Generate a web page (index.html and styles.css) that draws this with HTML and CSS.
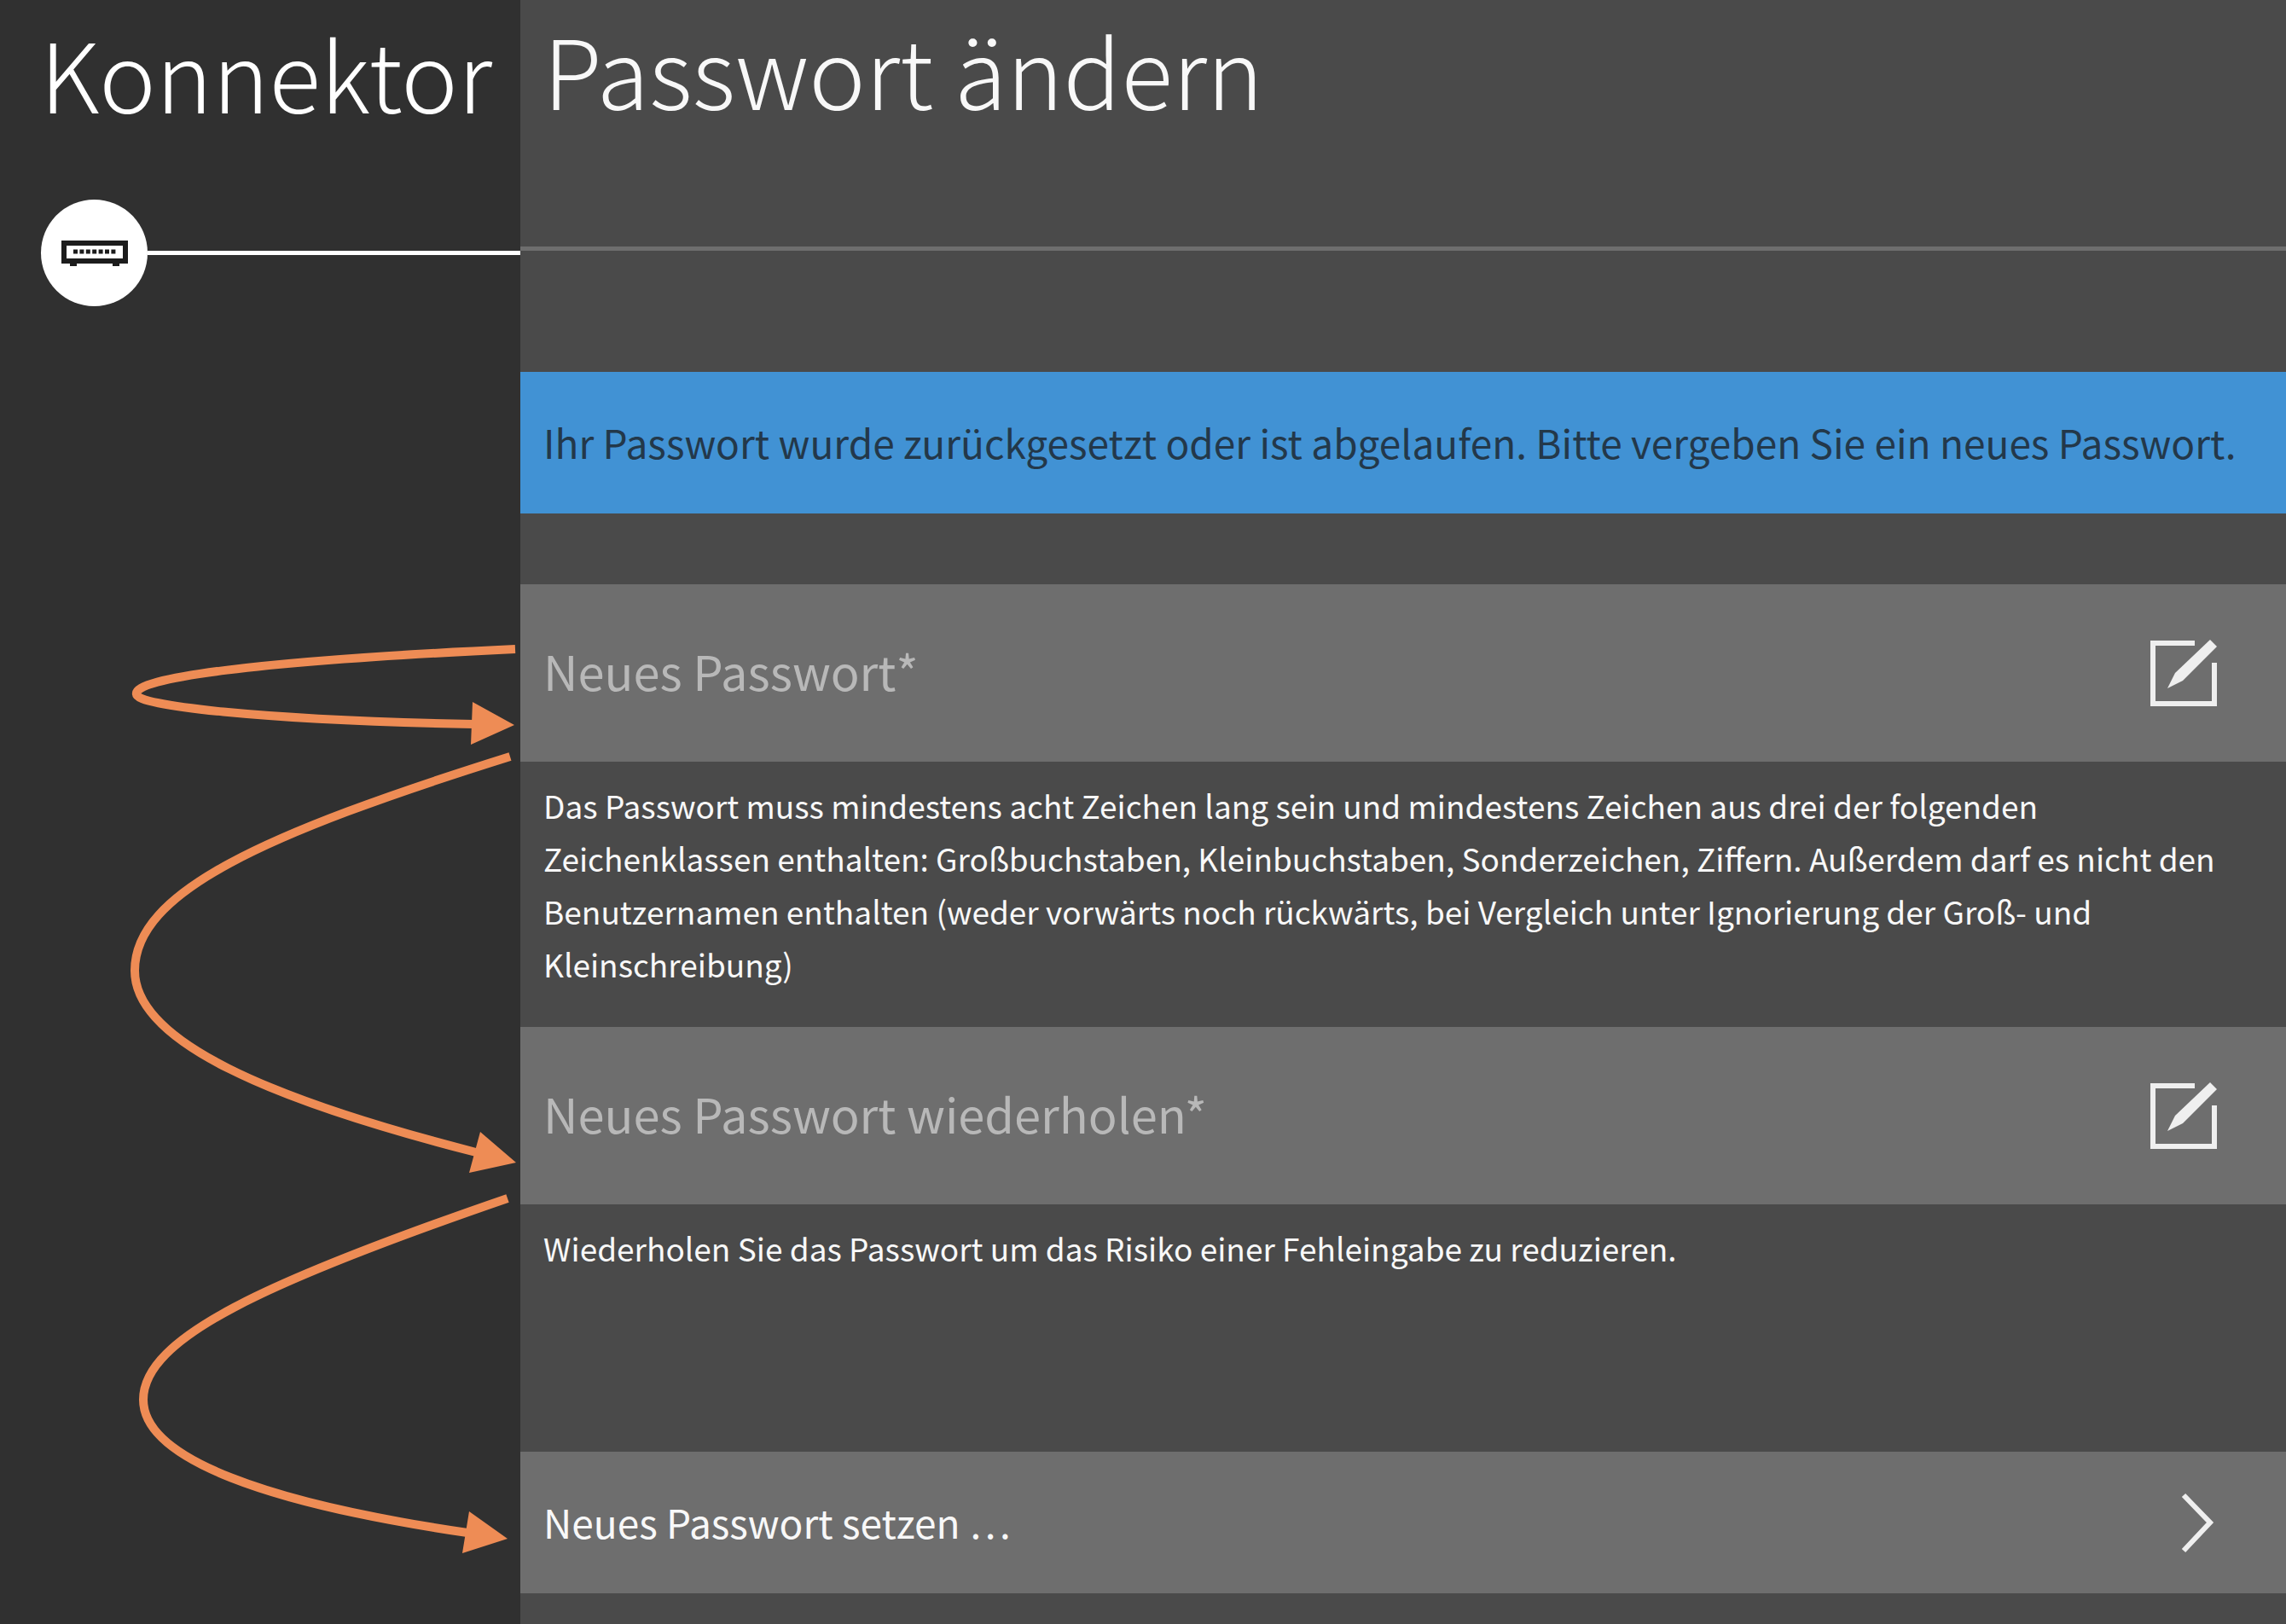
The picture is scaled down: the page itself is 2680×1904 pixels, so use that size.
FILE: index.html
```html
<!DOCTYPE html>
<html lang="de">
<head>
<meta charset="utf-8">
<meta name="viewport" content="width=device-width, initial-scale=1">
<title>Konnektor – Passwort ändern</title>
<link rel="stylesheet" href="styles.css">
</head>
<body>
<div class="layout">
  <aside class="sidebar">
    <h2 class="sidebar-title">Konnektor</h2>
    <div class="sidebar-track">
      <span class="device">
        <svg class="device-icon" viewBox="0 0 78 30" aria-hidden="true">
          <rect x="3" y="3" width="72" height="21" fill="none" stroke="#1c1c1c" stroke-width="6"/>
          <path d="M14 13h50" fill="none" stroke="#1c1c1c" stroke-width="5" stroke-dasharray="5 2.4"/>
          <path d="M10 26h8v4h-8zM60 26h8v4h-8z" fill="#1c1c1c"/>
        </svg>
      </span>
      <span class="sidebar-line"></span>
    </div>
    <svg class="arrows" viewBox="0 0 610 1904" aria-hidden="true">
      <g class="arrow-lines">
        <path d="M604 761C300 775 155 795 160 814C160 827 300 844 555 849"/>
        <path d="M598 887C308 978 158 1046 158 1138C158 1221 316 1289 558 1351"/>
        <path d="M595 1405C310 1503 168 1569 168 1641C168 1711 316 1763 548 1797"/>
      </g>
      <path class="arrow-heads" d="M554 823L603 850L552 873ZM563 1327L605 1363L550 1375ZM550 1772L595 1804L542 1821Z"/>
    </svg>
  </aside>
  <main class="content">
    <header class="page-header">
      <h1 class="page-title">Passwort ändern</h1>
    </header>
    <p class="banner" role="status">Ihr Passwort wurde zurückgesetzt oder ist abgelaufen. Bitte vergeben Sie ein neues Passwort.</p>
    <form class="form">
      <label class="field">
        <input class="field-input" type="password" placeholder="Neues Passwort*" aria-label="Neues Passwort" aria-describedby="hint-new">
        <svg class="row-icon" viewBox="0 0 80 80" aria-hidden="true">
          <path d="M53 2H1V79H79V28H73V73H7V8H53ZM21 58L30 40L71 1L79 9L39 49Z"/>
        </svg>
      </label>
      <p class="hint" id="hint-new">Das Passwort muss mindestens acht Zeichen lang sein und mindestens Zeichen aus drei der folgenden Zeichenklassen enthalten: Großbuchstaben, Kleinbuchstaben, Sonderzeichen, Ziffern. Außerdem darf es nicht den Benutzernamen enthalten (weder vorwärts noch rückwärts, bei Vergleich unter Ignorierung der Groß- und Kleinschreibung)</p>
      <label class="field">
        <input class="field-input" type="password" placeholder="Neues Passwort wiederholen*" aria-label="Neues Passwort wiederholen" aria-describedby="hint-repeat">
        <svg class="row-icon" viewBox="0 0 80 80" aria-hidden="true">
          <path d="M53 2H1V79H79V28H73V73H7V8H53ZM21 58L30 40L71 1L79 9L39 49Z"/>
        </svg>
      </label>
      <p class="hint" id="hint-repeat">Wiederholen Sie das Passwort um das Risiko einer Fehleingabe zu reduzieren.</p>
      <button class="submit" type="button">
        <span class="submit-label">Neues Passwort setzen …</span>
        <svg class="row-icon" viewBox="0 0 80 80" aria-hidden="true">
          <path class="chevron" d="M40 8L71 40L40 73"/>
        </svg>
      </button>
    </form>
  </main>
</div>
</body>
</html>
```

FILE: styles.css
```css
* {
  box-sizing: border-box;
}

body {
  margin: 0;
  background: #4a4a4a;
  color: #f8f8f8;
  font-family: "Noto Sans CJK SC", "Noto Sans", sans-serif;
}

h1,
h2,
p {
  margin: 0;
}

.layout {
  display: grid;
  grid-template-columns: 610px 1fr;
  min-height: 100vh;
}

.sidebar {
  position: relative;
  background: #303030;
}

.sidebar-title,
.page-title {
  font-size: 112px;
  font-weight: 300;
  line-height: 160px;
  white-space: nowrap;
}

.sidebar-title {
  padding: 4px 0 0 47px;
  color: #fff;
}

.sidebar-track {
  display: flex;
  align-items: center;
  padding: 70px 0 0 48px;
}

.device {
  display: flex;
  align-items: center;
  justify-content: center;
  width: 125px;
  height: 125px;
  border-radius: 50%;
  background: #fff;
}

.device-icon {
  width: 78px;
  height: 30px;
}

.sidebar-line {
  flex: 1;
  height: 5px;
  background: #fff;
}

.arrows {
  position: absolute;
  top: 0;
  left: 0;
  width: 610px;
  height: 1904px;
  pointer-events: none;
}

.arrow-lines {
  fill: none;
  stroke: #ee8c55;
  stroke-width: 10;
}

.arrow-heads {
  fill: #ee8c55;
}

.page-header {
  height: 294px;
  padding-left: 27px;
  border-bottom: 5px solid #6e6e6e;
}

.banner {
  margin-top: 142px;
  padding: 0 0 2px 27px;
  background: #4192d4;
  color: #23384a;
  font-size: 46px;
  line-height: 164px;
  white-space: nowrap;
}

.form {
  display: flex;
  flex-direction: column;
  margin-top: 83px;
}

.field,
.submit {
  display: flex;
  align-items: center;
  justify-content: space-between;
  padding: 0 80px 0 27px;
  background: #6e6e6e;
}

.field {
  height: 208px;
}

.field-input {
  flex: 1;
  min-width: 0;
  height: 100%;
  padding: 0 0 8px;
  border: 0;
  outline: 0;
  background: transparent;
  color: #f8f8f8;
  font: inherit;
  font-size: 56px;
}

.field-input::placeholder {
  color: #b8b8b8;
  opacity: 1;
}

.hint {
  min-height: 290px;
  padding: 20px 60px 43px 27px;
  font-size: 37px;
  line-height: 62px;
}

.submit {
  height: 166px;
  border: 0;
  color: #f8f8f8;
  font: inherit;
  font-size: 46px;
  text-align: left;
}

.submit-label {
  padding-bottom: 2px;
}

.row-icon {
  flex: none;
  width: 80px;
  height: 80px;
  fill: #efefef;
}

.chevron {
  fill: none;
  stroke: #efefef;
  stroke-width: 6;
}
```
